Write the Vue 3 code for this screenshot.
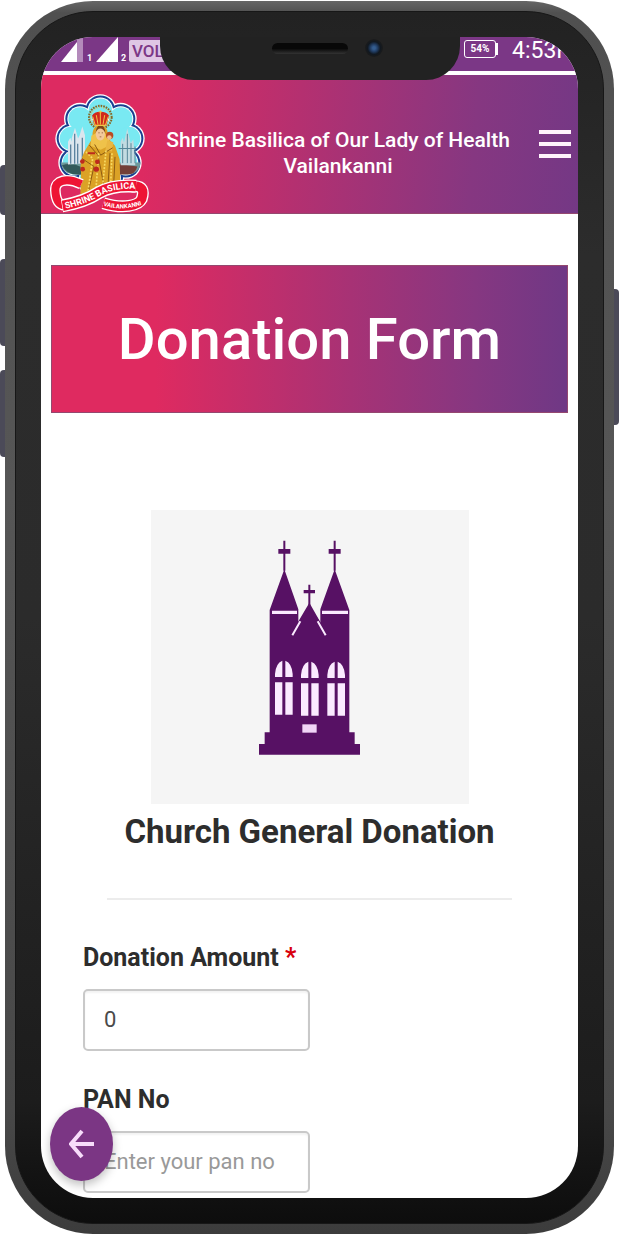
<template>
  <div class="phone">
    <span class="key key-silent"></span>
    <span class="key key-up"></span>
    <span class="key key-down"></span>
    <span class="key key-power"></span>
    <div class="bezel">
      <div class="screen">
        <div class="status-bar">
          <div class="signals">
            <svg width="26" height="26" viewBox="0 0 26 26">
              <path d="M16 0h6v25h-6z" fill="#b48abb" />
              <path d="M0 25L16 5v20z" fill="#fff" />
            </svg>
            <span class="sim">1</span>
            <svg width="26" height="26" viewBox="0 0 26 26">
              <path d="M1 25L23 0v25z" fill="#fff" />
            </svg>
            <span class="sim">2</span>
            <span class="volte">VOLTE</span>
          </div>
          <div class="clock">
            <span class="battery">54%</span>
            <span class="time">4:53PM</span>
          </div>
        </div>

        <header class="header">
          <svg class="logo" viewBox="27 24 300 362" role="img" aria-label="Shrine Basilica Vailankanni">
            <g v-for="ring in rings" :key="ring.r" :fill="ring.color">
              <circle v-for="(p, i) in petals" :key="i" :cx="p[0]" :cy="p[1]" :r="ring.r" />
              <circle cx="180" cy="185" r="82" />
            </g>
            <path d="M62 232h240q-6 42-50 34H105q-35 5-43-34z" fill="#6e9a9c" />
            <path d="M66 240q28-10 60 6v22q-44 6-60-28z" fill="#32595a" />
            <path d="M232 236l60 8q-6 24-30 24h-30z" fill="#733f38" />
            <path d="M84 238v-68l7-12 4 12v-10l10-32 9 32 5-10 8-26 8 26v84z" fill="#dce6ee" />
            <path d="M92 236v-58m12 58v-90m9 90v-60m14 60v-78" stroke="#5d84a0" stroke-width="4" fill="none" />
            <path d="M242 240v-70l6-12 4 14 10-42 10 44 8-12 6 78z" fill="#c3dbe1" />
            <path d="M248 234v-58m14 58v-88m11 88v-60m12 60v-50M236 190h54" stroke="#568698" stroke-width="3" fill="none" />
            <circle cx="181" cy="96" r="34" fill="none" stroke="#856927" stroke-width="6" stroke-dasharray="5 3" />
            <circle cx="181" cy="96" r="29" fill="none" stroke="#e7bd42" stroke-width="3" stroke-dasharray="3 3" />
            <path d="M158 158q-4-36 23-38 26 2 22 38l22 24 14 40 2 78-60 18-60 16 2-72q-6-30 10-62z" fill="#dba226" />
            <path d="M154 152q24-18 52 0l4 28-28 14-30-12z" fill="#efc24a" />
            <ellipse cx="181" cy="146" rx="14" ry="20" fill="#f2c89a" />
            <path d="M167 144q2-24 14-24 14 0 15 24-6-14-15-14-10 0-14 14z" fill="#7b441a" />
            <path d="M175 143h4m6 0h4m-10 12h5" stroke="#784026" stroke-width="2" />
            <path d="M156 92q6-12 25-12 20 0 26 12l-8 30h-36z" fill="#d12a1c" />
            <path d="M158 94l8 27h30l9-27M181 76v42M169 90l5 28M194 90l-5 28M162 120h38M176 80h10" fill="none" stroke="#f0c548" stroke-width="3" />
            <circle cx="209" cy="151" r="11" fill="#b94a23" />
            <circle cx="208" cy="157" r="7" fill="#efbd8b" />
            <path d="M202 165l18 6-4 28-20-4z" fill="#eab742" />
            <path d="M148 180l26 30 18 92M164 178l18 32 36-22M126 220l36 24-18 80M210 204l-6 98M225 215l-4 84" fill="none" stroke="#8d5b12" stroke-width="3" />
            <path d="M138 200l20 20-14 98M176 204l-8 108M198 196l-10 106M216 204l-4 94" fill="none" stroke="#f8db64" stroke-width="5" stroke-dasharray="6 4" />
            <g fill="#bd2a1d">
              <circle cx="127" cy="229" r="7" />
              <circle cx="128" cy="252" r="7" />
              <circle cx="172" cy="230" r="7" />
              <circle cx="169" cy="252" r="8" />
              <path d="M143 201h22v6h-22z" />
            </g>
            <g fill="none" stroke-linejoin="round">
              <path d="M124 297C80 276 45 285 46 315C47 344 56 362 78 360" stroke="#fff" stroke-width="32" />
              <path d="M272 304C312 298 312 320 305 342C295 362 250 372 190 354" stroke="#fff" stroke-width="36" />
              <path d="M124 297C80 276 45 285 46 315C47 344 56 362 78 360" stroke="#ee1434" stroke-width="24" />
              <path d="M272 304C312 298 312 320 305 342C295 362 250 372 190 354" stroke="#ee1434" stroke-width="28" />
              <path d="M66 362Q135 350 177 322Q220 298 288 303" stroke="#fff" stroke-width="39" />
              <path d="M68 362Q135 350 177 322Q220 298 288 303" stroke="#ee1434" stroke-width="31" />
            </g>
            <path id="upper-band" d="M77 371Q142 355 178 333Q218 308 294 311" fill="none" />
            <path id="lower-band" d="M190 361Q245 380 312 357" fill="none" />
            <text class="logo-text"><textPath href="#upper-band">SHRINE BASILICA</textPath></text>
            <text class="logo-text small"><textPath href="#lower-band">VAILANKANNI</textPath></text>
          </svg>
          <p class="brand">Shrine Basilica of Our Lady of Health Vailankanni</p>
          <button class="menu" type="button" aria-label="Menu">
            <span></span>
            <span></span>
            <span></span>
          </button>
        </header>

        <main class="content">
          <h1 class="banner">Donation Form</h1>

          <div class="card">
            <svg width="140" height="240" viewBox="0 0 420 720" role="img" aria-label="Church">
              <g fill="#571164">
                <path d="M130 32h6v90h-6zM115 57h36v14h-36zM281 32h6v90h-6zM266 57h36v14h-36zM205 164h6v68h-6zM191 180h34v10h-34z" />
                <path d="M133 118L175 238v40L208 226L241 278v-40L284 118L328 240v367h16v35h16v32H57v-32h17v-35h15V240z" />
              </g>
              <path d="M158 315L208 230L256 315" fill="none" stroke="#571164" stroke-width="12" />
              <path d="M96 242h75v10H96zM246 242h78v10h-78z" fill="#fbeaff" />
              <path d="M157 316L181 274M257 316L233 274" stroke="#fbeaff" stroke-width="6" fill="none" />
              <g v-for="w in windows" :key="w.x" :transform="`translate(${w.x} ${w.y})`" fill="#fbeaff">
                <path d="M22 0v49H0V40Q2 8 22 0zM31 0v49h22V40Q51 8 31 0zM0 65h22v97H0zM31 65h22v97H31z" />
              </g>
              <path d="M187 583h43v25h-43z" fill="#f1d5f7" />
            </svg>
          </div>
          <h2 class="title">Church General Donation</h2>
          <hr class="divider" />

          <form class="form" @submit.prevent>
            <label for="amount">Donation Amount <span class="required">*</span></label>
            <input id="amount" v-model="amount" type="text" inputmode="numeric" required />
            <label for="pan">PAN No</label>
            <input id="pan" v-model="pan" type="text" placeholder="Enter your pan no" />
          </form>
        </main>

        <button class="back" type="button" aria-label="Back">
          <svg width="26" height="30" viewBox="0 0 26 30">
            <path d="M13 2L2 15l11 13M2 15h23" fill="none" stroke="#f7dcfa" stroke-width="4" />
          </svg>
        </button>

        <div class="notch">
          <span class="speaker"></span>
          <span class="camera"></span>
        </div>
      </div>
    </div>
  </div>
</template>

<script setup>
import { ref } from 'vue'

const amount = ref('0')
const pan = ref('')

const petals = [
  [181, 75], [120, 101], [242, 101], [94, 160],
  [266, 160], [103, 233], [257, 233], [155, 278], [205, 278]
]

const rings = [
  { r: 48, color: '#fff' },
  { r: 44, color: '#183f91' },
  { r: 38, color: '#fff' },
  { r: 35, color: '#79e9f2' }
]

const windows = [
  { x: 105, y: 392 },
  { x: 183, y: 395 },
  { x: 262, y: 395 }
]
</script>

<style>
body {
  margin: 0;
  background: #fff;
}
</style>

<style scoped>
* {
  box-sizing: border-box;
}

.phone {
  position: relative;
  margin: 1px 5px;
  padding: 10px;
  border-radius: 88px;
  background: linear-gradient(#666 0, #505050 12px, #565656 40%, #484848 90%, #3c3c3c);
  font-family: Roboto, "Liberation Sans", sans-serif;
  color: #2d2d2d;
}

.bezel {
  padding: 25px;
  border: 1px solid #171717;
  border-radius: 78px;
  background: linear-gradient(#222, #2c2c2c 20%, #2b2b2b 50%, #1c1c1c 90%, #0d0d0d);
}

.screen {
  position: relative;
  overflow: hidden;
  padding-bottom: 5px;
  border-radius: 52px;
  background: #fff;
}

.key {
  position: absolute;
  left: -5px;
  width: 5px;
  border-radius: 4px 0 0 4px;
  background: #4b4a58;
}

.key-silent {
  top: 164px;
  height: 50px;
}

.key-up {
  top: 258px;
  height: 87px;
}

.key-down {
  top: 369px;
  height: 87px;
}

.key-power {
  top: 288px;
  right: -5px;
  left: auto;
  height: 136px;
  border-radius: 0 4px 4px 0;
}

.status-bar {
  display: flex;
  justify-content: space-between;
  height: 38px;
  padding-left: 20px;
  border-bottom: 4px solid #fff;
  background: #7b3786;
  color: #fff;
}

.signals {
  display: flex;
  align-items: flex-start;
}

.sim {
  width: 8px;
  padding-top: 16px;
  font-size: 9px;
  font-weight: 700;
  line-height: 10px;
}

.volte {
  margin-top: 3px;
  padding: 0 3px;
  border-radius: 2px;
  background: #dfc6e4;
  color: #7b3786;
  font-size: 17px;
  font-weight: 500;
  line-height: 22px;
}

.clock {
  display: flex;
  align-items: flex-start;
  gap: 16px;
  width: 114px;
}

.battery {
  position: relative;
  flex: none;
  width: 32px;
  margin-top: 3px;
  border: 1px solid #fff;
  border-radius: 3px;
  font-size: 10px;
  font-weight: 700;
  line-height: 16px;
  text-align: center;
}

.battery::after {
  content: "";
  position: absolute;
  top: 2px;
  right: -3px;
  width: 2px;
  height: 12px;
  background: #fff;
}

.time {
  font-size: 23px;
  line-height: 27px;
}

.header {
  display: flex;
  align-items: center;
  height: 139px;
  padding: 0 7px 0 8px;
  border-bottom: 1px solid #94486f;
  background: linear-gradient(95deg, #dd2a61 20%, #a73275 57%, #863781 80%, #743885);
}

.logo {
  flex: none;
  width: 100px;
  height: 121px;
  margin-top: 18px;
}

.logo-text {
  fill: #fff;
  font-family: Roboto, sans-serif;
  font-size: 27px;
  font-weight: 700;
}

.logo-text.small {
  font-size: 18px;
}

.brand {
  flex: 1;
  margin: 18px 0 0;
  color: #fff;
  font-size: 21px;
  font-weight: 500;
  line-height: 26px;
  text-align: center;
}

.menu {
  display: flex;
  flex: none;
  flex-direction: column;
  gap: 8px;
  width: 32px;
  margin-left: 12px;
  padding: 0;
  border: 0;
  background: none;
}

.menu span {
  height: 4px;
  background: #fff3fb;
}

.content {
  padding: 51px 10px 0;
}

.banner {
  margin: 0;
  border: 1px solid #94486f;
  background: linear-gradient(90deg, #df2a60 20%, #a73275 58%, #863781 82%, #6f3885);
  color: #fff;
  font-size: 58px;
  font-weight: 500;
  line-height: 146px;
  text-align: center;
}

.card {
  display: flex;
  justify-content: center;
  width: 318px;
  max-width: 100%;
  margin: 97px auto 0;
  padding: 20px 0 34px;
  background: #f5f5f5;
}

.title {
  margin: 8px 0 0;
  font-size: 33px;
  font-weight: 700;
  line-height: 40px;
  text-align: center;
}

.divider {
  margin: 46px 56px 44px;
  border: 0;
  border-top: 2px solid #ececec;
}

.form {
  display: flex;
  flex-direction: column;
  align-items: flex-start;
  padding-left: 32px;
}

.form label {
  margin-bottom: 17px;
  font-size: 25px;
  font-weight: 700;
  line-height: 28px;
}

.required {
  color: #d8000c;
}

.form input {
  width: 227px;
  height: 62px;
  padding: 0 19px 2px;
  border: 2px solid #c9c9c9;
  border-radius: 5px;
  background: #fff;
  box-shadow: inset 0 2px 2px rgba(0, 0, 0, 0.05);
  color: #4a4a4a;
  font-family: inherit;
  font-size: 22px;
}

.form input::placeholder {
  color: #999;
  opacity: 1;
}

.form input + label {
  margin-top: 35px;
}

.back {
  position: absolute;
  bottom: 17px;
  left: 9px;
  display: flex;
  align-items: center;
  justify-content: center;
  width: 63px;
  height: 74px;
  padding: 0;
  border: 0;
  border-radius: 50%;
  background: #7b3684;
  box-shadow: 0 4px 10px rgba(0, 0, 0, 0.25);
}

.notch {
  position: absolute;
  top: 0;
  left: 50%;
  display: flex;
  align-items: flex-start;
  gap: 17px;
  width: 300px;
  height: 43px;
  margin-left: -150px;
  padding-left: 112px;
  border-radius: 0 0 34px 34px;
  background: #222;
}

.speaker {
  width: 76px;
  height: 11px;
  margin-top: 6px;
  border-radius: 6px;
  background: linear-gradient(#080808 50%, #333);
}

.camera {
  width: 18px;
  height: 18px;
  margin-top: 2px;
  border-radius: 50%;
  background: radial-gradient(circle, #345d90 10%, #203b60 30%, #111820 50%, #1b1b1b 70%);
}
</style>
